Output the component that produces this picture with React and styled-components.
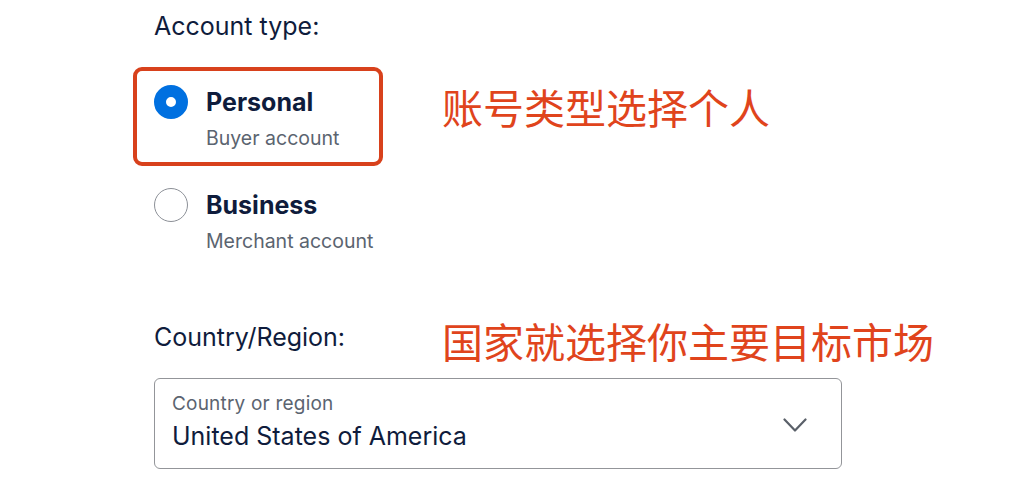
import React from 'react';
import styled, { createGlobalStyle } from 'styled-components';

const Global = createGlobalStyle`
	html, body {
		margin: 0;
		padding: 0;
		background: #ffffff;
	}
	body {
		font-family: Inter, "Noto Sans", "Liberation Sans", sans-serif;
		color: #0f1c3c;
	}
`

const Frame = styled.div`
	width: 1024px;
	height: 477px;
	overflow: hidden;
	background: #ffffff;
	box-sizing: border-box;
	padding: 11px 0 0 154px;
`

const Layout = styled.div`
	display: grid;
	grid-template-columns: 288px 1fr;
	align-items: start;
`

const SectionLabel = styled.div`
	grid-column: ${p => (p.$inline ? 'auto' : '1 / -1')};
	font-size: 25px;
	line-height: 30px;
	font-weight: 400;
	color: #0f1c3c;
	margin-top: ${p => p.$top || 0}px;
`

const OptionCard = styled.label`
	display: grid;
	grid-template-columns: 34px auto;
	column-gap: 18px;
	align-items: center;
	align-content: start;
	box-sizing: border-box;
	width: 250px;
	height: 99px;
	margin-left: -21px;
	margin-top: ${p => p.$top || 0}px;
	padding: 14px 17px 11px;
	border: 4px solid ${p => (p.$highlight ? '#d8411c' : 'transparent')};
	border-radius: 9px;
	cursor: pointer;
`

const Radio = styled.span`
	width: 34px;
	height: 34px;
	box-sizing: border-box;
	border-radius: 50%;
	border: ${p => (p.$checked ? '12px solid #0070e0' : '1.5px solid #8c9097')};
	background: #ffffff;
`

const OptionTitle = styled.span`
	font-size: 25px;
	line-height: 30px;
	font-weight: 700;
	color: #0f1c3c;
	white-space: nowrap;
`

const OptionSub = styled.span`
	grid-column: 2;
	margin-top: 7px;
	font-size: 19.5px;
	line-height: 24px;
	color: #5b6470;
	white-space: nowrap;
`

const Note = styled.div`
	font-family: "Noto Sans CJK SC", "Noto Sans", sans-serif;
	font-size: 41px;
	line-height: 50px;
	color: #e0441c;
	white-space: nowrap;
	margin-top: ${p => p.$shift || 0}px;
`

const SelectBox = styled.div`
	grid-column: 1 / -1;
	width: 688px;
	height: 91px;
	box-sizing: border-box;
	margin-top: 13px;
	border: 1px solid #939599;
	border-radius: 6px;
	display: flex;
	align-items: center;
	padding: 0 34px 0 17px;
`

const SelectText = styled.div`
	flex: 1;
	align-self: flex-start;
	display: flex;
	flex-direction: column;
	padding-top: 13px;
`

const SelectLabel = styled.span`
	font-size: 19px;
	line-height: 24px;
	letter-spacing: 0.2px;
	color: #5b6470;
`

const SelectValue = styled.span`
	margin-top: 5px;
	font-size: 25px;
	line-height: 30px;
	color: #0f1c3c;
`

const Chevron = () => (
	<svg width="24" height="15" viewBox="0 0 24 15" style={{ marginTop: 4 }}>
		<polyline points="1.5,1.5 12,12.5 22.5,1.5" fill="none" stroke="#5a6069" strokeWidth="2.2" strokeLinecap="round" strokeLinejoin="round" />
	</svg>
)

const App = () => {
	return (
		<Frame>
			<Global />
			<Layout>
				<SectionLabel>Account type:</SectionLabel>

				<OptionCard $highlight $top={26}>
					<Radio $checked />
					<OptionTitle>Personal</OptionTitle>
					<OptionSub>Buyer account</OptionSub>
				</OptionCard>
				<Note $shift={40}>账号类型选择个人</Note>

				<OptionCard $top={4}>
					<Radio />
					<OptionTitle>Business</OptionTitle>
					<OptionSub>Merchant account</OptionSub>
				</OptionCard>
				<div />

				<SectionLabel $inline $top={53}>Country/Region:</SectionLabel>
				<Note $shift={46}>国家就选择你主要目标市场</Note>

				<SelectBox>
					<SelectText>
						<SelectLabel>Country or region</SelectLabel>
						<SelectValue>United States of America</SelectValue>
					</SelectText>
					<Chevron />
				</SelectBox>
			</Layout>
		</Frame>
	);
}

export default App;
